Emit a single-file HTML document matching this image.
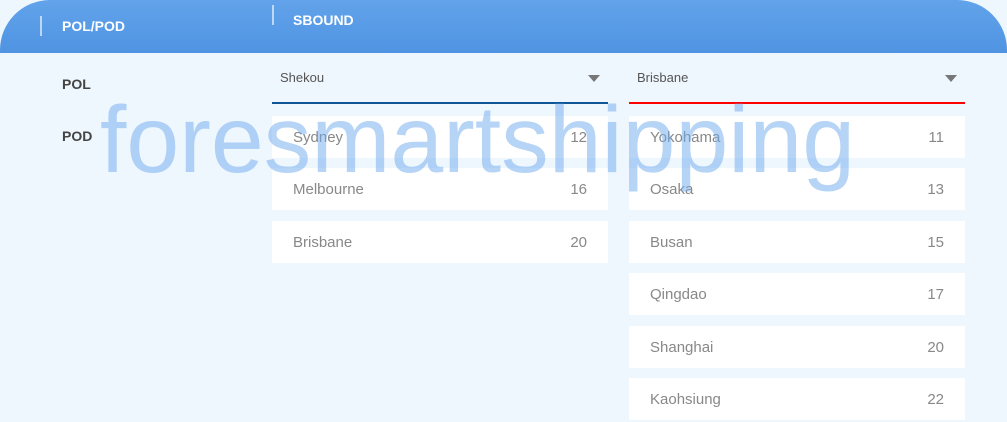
<!DOCTYPE html>
<html><head><style>
*{margin:0;padding:0;box-sizing:border-box}
body{width:1007px;height:422px;background:#eef6fe;font-family:"Liberation Sans",Arial,sans-serif;position:relative;overflow:hidden}
.hdr{position:absolute;left:0;top:0;width:1007px;height:53px;background:linear-gradient(180deg,#62a3ea,#4f93e2);border-radius:50px 50px 0 0}
.t{position:absolute;color:#fff;font-weight:bold;font-size:14px}
.bar{position:absolute;width:2px;background:rgba(255,255,255,.6)}
.lbl{position:absolute;font-weight:bold;font-size:14px;color:#444}
.sel{position:absolute;height:2px}
.st{position:absolute;font-size:13px;color:#555}
.arr{position:absolute;width:0;height:0;border-left:6px solid transparent;border-right:6px solid transparent;border-top:7px solid #777}
.card{position:absolute;width:336px;height:42px;background:#fff;font-size:15px;color:#888}
.card span{position:absolute;left:21px;top:13px}
.card b{position:absolute;right:21px;top:13px;font-weight:normal}
.wm{position:absolute;left:100px;top:85px;font-size:95px;line-height:110px;color:rgba(110,170,238,.5);white-space:nowrap}
</style></head><body>
<div class="hdr"></div>
<div class="bar" style="left:40px;top:16px;height:20px"></div>
<div class="t" style="left:62px;top:18px">POL/POD</div>
<div class="bar" style="left:272px;top:5px;height:20px"></div>
<div class="t" style="left:293px;top:12px">SBOUND</div>
<div class="lbl" style="left:62px;top:76px">POL</div>
<div class="lbl" style="left:62px;top:128px">POD</div>
<div class="st" style="left:280px;top:70px">Shekou</div>
<div class="arr" style="left:588px;top:75px"></div>
<div class="sel" style="left:272px;top:102px;width:336px;background:#0d5596"></div>
<div class="st" style="left:637px;top:70px">Brisbane</div>
<div class="arr" style="left:945px;top:75px"></div>
<div class="sel" style="left:629px;top:102px;width:336px;background:#f00"></div>
<div class="card" style="left:272px;top:116px"><span>Sydney</span><b>12</b></div>
<div class="card" style="left:272px;top:168px"><span>Melbourne</span><b>16</b></div>
<div class="card" style="left:272px;top:221px"><span>Brisbane</span><b>20</b></div>
<div class="card" style="left:629px;top:116px"><span>Yokohama</span><b>11</b></div>
<div class="card" style="left:629px;top:168px"><span>Osaka</span><b>13</b></div>
<div class="card" style="left:629px;top:221px"><span>Busan</span><b>15</b></div>
<div class="card" style="left:629px;top:273px"><span>Qingdao</span><b>17</b></div>
<div class="card" style="left:629px;top:326px"><span>Shanghai</span><b>20</b></div>
<div class="card" style="left:629px;top:378px"><span>Kaohsiung</span><b>22</b></div>
<div class="wm">foresmartshipping</div>
</body></html>
